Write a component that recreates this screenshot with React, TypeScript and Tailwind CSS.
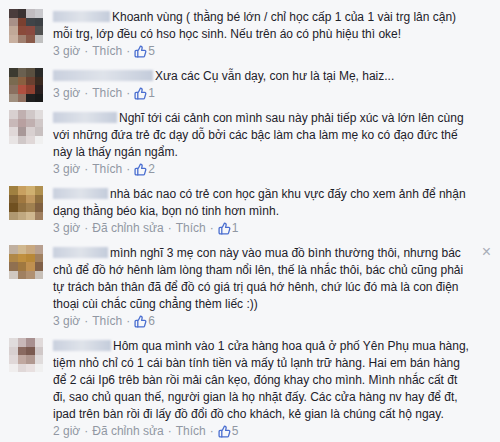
import { ThumbsUp } from "lucide-react";

type Comment = {
  avatar: string[];
  nameW: number;
  lines: string[];
  time: string;
  edited?: boolean;
  likes: number;
  closable?: boolean;
};

const comments: Comment[] = [
  {
    avatar: [
      "#4a3c3c", "#3a3232", "#c0bcc0", "#c8c8cc",
      "#a89088", "#7a4030", "#404448", "#3c4044",
      "#c0a898", "#8a4a3a", "#8a4a40", "#505050",
      "#c8b0a0", "#a08070", "#8a5a4a", "#c0c0c0",
    ],
    nameW: 57,
    lines: [
      "Khoanh vùng ( thằng bé lớn / chỉ học cấp 1 của 1 vài trg lân cận)",
      "mỗi trg, lớp đều có hso học sinh. Nếu trên áo có phù hiệu thì oke!",
    ],
    time: "3 giờ",
    likes: 5,
  },
  {
    avatar: [
      "#3c3a30", "#6a6050", "#5a5040", "#2a2a28",
      "#7a6a50", "#8a6040", "#6a4030", "#3a2a20",
      "#8a7060", "#b05040", "#904030", "#2a2020",
      "#a09080", "#907060", "#202020", "#1a1a1a",
    ],
    nameW: 100,
    lines: ["Xưa các Cụ vẫn dạy, con hư là tại Mẹ, haiz..."],
    time: "3 giờ",
    likes: 1,
  },
  {
    avatar: [
      "#d8d0d0", "#c0b0b0", "#d0c8c8", "#e0dcdc",
      "#c8b8b8", "#b8a0a0", "#c0b0b0", "#d0c8c8",
      "#e0d8d8", "#a89898", "#d8d0d0", "#c8c0c0",
      "#e8e4e4", "#d0c8c8", "#e0d8d8", "#f0f0f0",
    ],
    nameW: 64,
    lines: [
      "Nghĩ tới cái cảnh con mình sau này phải tiếp xúc và lớn lên cùng",
      "với những đứa trẻ đc dạy dỗ bởi các bậc làm cha làm mẹ ko có đạo đức thế",
      "này là thấy ngán ngẩm.",
    ],
    time: "3 giờ",
    likes: 2,
  },
  {
    avatar: [
      "#a08040", "#c8a060", "#d0b070", "#b09050",
      "#806030", "#a07840", "#c09860", "#907040",
      "#705020", "#907040", "#a08050", "#806040",
      "#b09870", "#c0a880", "#d0b890", "#a08060",
    ],
    nameW: 55,
    lines: [
      "nhà bác nao có trẻ con học gần khu vực đấy cho xem ảnh để nhận",
      "dạng thằng béo kia, bọn nó tinh hơn mình.",
    ],
    time: "3 giờ",
    edited: true,
    likes: 1,
  },
  {
    avatar: [
      "#c0b0a0", "#d0b890", "#c8a880", "#b8a090",
      "#b08848", "#c09040", "#b88838", "#a08060",
      "#907050", "#a07840", "#c09050", "#806048",
      "#d0c8c0", "#a08060", "#b09070", "#c8c0b8",
    ],
    nameW: 55,
    lines: [
      "mình nghĩ 3 mẹ con này vào mua đồ bình thường thôi, nhưng bác",
      "chủ để đồ hớ hênh làm lòng tham nổi lên, thế là nhắc thôi, bác chủ cũng phải",
      "tự trách bản thân đã để đồ có giá trị quá hớ hênh, chứ lúc đó mà là con điện",
      "thoại cùi chắc cũng chẳng thèm liếc :))",
    ],
    time: "3 giờ",
    likes: 6,
    closable: true,
  },
  {
    avatar: [
      "#e0dcdc", "#c8b8b8", "#a89090", "#e0dada",
      "#d8d0d0", "#8a6a60", "#7a5a50", "#d0c8c8",
      "#e0d8d8", "#c0a8a0", "#b09890", "#e0dcdc",
      "#f0eeee", "#e0d8d8", "#e8e0e0", "#f0f0f0",
    ],
    nameW: 58,
    lines: [
      "Hôm qua mình vào 1 cửa hàng hoa quả ở phố Yên Phụ mua hàng,",
      "tiệm nhỏ chỉ có 1 cái bàn tính tiền và mấy tủ lạnh trữ hàng. Hai em bán hàng",
      "để 2 cái Ip6 trêb bàn rồi mải cân kẹo, đóng khay cho mình. Mình nhắc cất đt",
      "đi, sao chủ quan thế, người gian là họ nhặt đấy. Các cửa hàng nv hay để đt,",
      "ipad trên bàn rồi đi lấy đồ đổi đồ cho khách, kẻ gian là chúng cất hộ ngay.",
    ],
    time: "2 giờ",
    edited: true,
    likes: 5,
  },
];

function Avatar({ cells }: { cells: string[] }) {
  return (
    <div className="grid grid-cols-4 grid-rows-4 w-[34px] h-[34px] shrink-0 overflow-hidden">
      {cells.map((c, i) => (
        <div key={i} style={{ backgroundColor: c }} />
      ))}
    </div>
  );
}

function Sep() {
  return <span className="mx-[4px]">·</span>;
}

function CommentRow({ c }: { c: Comment }) {
  return (
    <div className="relative flex gap-[10px] pl-[9px] pr-[24px]">
      <Avatar cells={c.avatar} />
      <div className="flex flex-col text-[12px] leading-[17px]">
        {c.lines.map((line, i) => (
          <div key={i} className="whitespace-nowrap text-[#1d2129]">
            {i === 0 && (
              <span
                className="inline-block h-[11px] mr-[2px] align-[-1px] blur-[1px] bg-gradient-to-r from-[#c9d0de] via-[#dfe3ea] to-[#c4ccdb]"
                style={{ width: c.nameW }}
              />
            )}
            {line}
          </div>
        ))}
        <div className="flex items-center whitespace-nowrap text-[#9197a3]">
          <span>{c.time}</span>
          <Sep />
          {c.edited && (
            <>
              <span>Đã chỉnh sửa</span>
              <Sep />
            </>
          )}
          <span>Thích</span>
          <Sep />
          <ThumbsUp size={13} strokeWidth={2.4} className="text-[#4a6ed0] mr-[1px]" />
          <span>{c.likes}</span>
        </div>
      </div>
      {c.closable && (
        <span className="absolute right-[9px] top-[-2px] text-[16px] leading-[17px] text-[#a8adb8]">
          ×
        </span>
      )}
    </div>
  );
}

export default function App() {
  return (
    <div className="w-[500px] h-[442px] overflow-hidden bg-[#f6f7f9] font-['Liberation_Sans',Arial,sans-serif]">
      <div className="flex flex-col gap-[8px] pt-[9px]">
        {comments.map((c, i) => (
          <CommentRow key={i} c={c} />
        ))}
      </div>
    </div>
  );
}
